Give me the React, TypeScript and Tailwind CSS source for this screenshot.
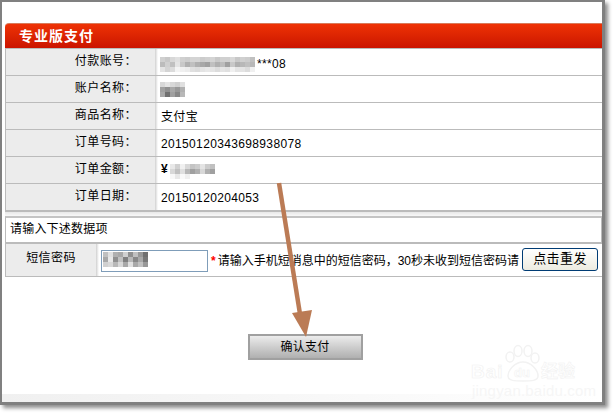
const font = {
  fontFamily: '"Liberation Sans", "Noto Sans CJK SC", sans-serif',
};

const accountCells = [
  "d0d0d0 c8c8c8 d8d8d8 e0e0e0 d0d0d0 cccccc d4d4d4 d4d4d4 cccccc d0d0d0 d4d4d4 c8c8c8 d0d0d0 d0d0d0 d8d8d8 c8c8c8 d0d0d0 cccccc c0c0c0",
  "bcbcbc d0d0d0 c0c0c0 e4e4e4 c8c8c8 b0b0b0 c0c0c0 b0b0b0 a8a8a8 a0a0a0 c0c0c0 b0b0b0 bcbcbc a0a0a0 c8c8c8 b0b0b0 b8b8b8 c0c0c0 b8b8b8",
  "e4e4e4 d4d4d4 dcdcdc f4f4f4 f0f0f0 ececec e0e0e0 dcdcdc e4e4e4 e8e8e8 e4e4e4 dcdcdc e4e4e4 e0e0e0 f0f0f0 e4e4e4 e4e4e4 dcdcdc f0f0f0",
].map((r) => r.split(" "));
const nameCells = [
  "d8d8d8 e4e4e4 d8d8d8 d0d0d0 e0e0e0",
  "a0a0a0 909090 a8a8a8 989898 b0b0b0",
  "a8a8a8 707070 a0a0a0 888888 b8b8b8",
].map((r) => r.split(" "));
const amountCells = [
  "e8e8e8 d0d0d0 f0f0f0 d8d8d8 c4c4c4 cccccc e4e4e4 cccccc c0c0c0",
  "d8d8d8 c0c0c0 e0e0e0 b8b8b8 a0a0a0 b0b0b0 d8d8d8 b0b0b0 a0a0a0",
  "f8f8f8 e8e8e8 fafafa f0f0f0 ffffff ffffff ffffff ffffff ffffff",
].map((r) => r.split(" "));
const codeCells = [
  "c0c0c0 e0e0e0 b0b0b0 a8a8a8 d0d0d0 909090 c0c0c0 989898 707070",
  "a8a8a8 e8e8e8 909090 c0c0c0 808080 b8b8b8 888888 a8a8a8 787878",
  "d0d0d0 d8d8d8 b8b8b8 d8d8d8 a8a8a8 e0e0e0 a8a8a8 c0c0c0 989898",
].map((r) => r.split(" "));

function Mosaic({ cells, size = 5 }: { cells: string[][]; size?: number }) {
  return (
    <span className="inline-flex flex-col">
      {cells.map((row, y) => (
        <span className="flex" key={y}>
          {row.map((c, x) => (
            <span
              key={x}
              style={{ width: size, height: size, background: `#${c}` }}
            />
          ))}
        </span>
      ))}
    </span>
  );
}

function Row({
  label,
  children,
  last,
}: {
  label: string;
  children: React.ReactNode;
  last?: boolean;
}) {
  return (
    <div
      className={`flex h-[27px] border-b border-[#bbbbbb] ${
        last ? "border-b-2 h-[28px]" : ""
      }`}
    >
      <div className="flex w-[149px] items-center justify-end bg-[#ececec] pr-[18px] pb-[3px] tracking-[0.45px]">
        {label}
      </div>
      <div className="w-[3px] bg-gradient-to-r from-[#d0d0d0] to-white" />
      <div className="flex flex-1 items-center pl-[3px] pt-[1px] tracking-[0.35px]">
        {children}
      </div>
    </div>
  );
}

function Watermark() {
  return (
    <div className="absolute left-[460px] top-[340px] h-[62px] w-[125px] text-white select-none">
      <svg
        className="absolute left-0 top-0"
        width="125"
        height="62"
        viewBox="0 0 125 62"
        fill="#fff"
        stroke="#f2f2f2"
        strokeWidth="1.5"
      >
        <ellipse cx="50" cy="17" rx="4" ry="5" />
        <ellipse cx="58" cy="11" rx="4" ry="5.5" />
        <ellipse cx="68" cy="11" rx="4" ry="5.5" />
        <ellipse cx="75" cy="18" rx="4" ry="5" />
        <path d="M63 22c8 0 15 8 15 14 0 5-7 5-15 5s-15 0-15-5c0-6 7-14 15-14z" />
      </svg>
      <span className="absolute left-[11px] top-[21px] text-[19px] font-bold leading-[22px] tracking-[1px] [-webkit-text-stroke:0.7px_#f2f2f2]">
        Bai
      </span>
      <span className="absolute left-[54px] top-[25px] text-[13px] font-bold leading-[16px] [-webkit-text-stroke:0.6px_#f2f2f2]">
        du
      </span>
      <span className="absolute left-[81px] top-[21px] text-[17px] font-bold leading-[22px] [-webkit-text-stroke:0.6px_#f2f2f2]">
        经验
      </span>
      <span className="absolute left-[12px] top-[43px] text-[15px] leading-[16px] tracking-[0.2px] text-[#f6f6f6]">
        jingyan.baidu.com
      </span>
    </div>
  );
}

export default function App() {
  return (
    <div
      className="relative h-[413px] w-[613px] overflow-hidden bg-white text-[12px] leading-none text-black"
      style={font}
    >
      <div className="flex h-[405px] w-[605px] flex-col border-t-2 border-r-[3px] border-b-[3px] border-l-2 border-[#808080] shadow-[3px_3px_4px_rgba(0,0,0,0.45)]">
        <div className="flex-1 pt-[21px] pl-[3px]">
          <div className="flex h-[25px] items-center rounded-tl-[4px] border-t border-[#d97a5a] bg-gradient-to-b from-[#ee3205] to-[#cb1300] pl-[14px] pb-[1px] text-[14px] font-bold tracking-[1px] text-white">
            专业版支付
          </div>
          <div className="border-l border-t border-[#bbbbbb]">
            <Row label="付款账号：">
              <span className="-ml-[1px] mb-[1px]">
                <Mosaic cells={accountCells} />
              </span>
              <span className="ml-[2px] mt-[2px]">***08</span>
            </Row>
            <Row label="账户名称：">
              <span className="mb-[6px] -ml-[1px]">
                <Mosaic cells={nameCells} />
              </span>
            </Row>
            <Row label="商品名称：">支付宝</Row>
            <Row label="订单号码：">20150120343698938078</Row>
            <Row label="订单金额：">
              <span className="mb-[3px] font-bold">¥</span>
              <span className="mb-[3px] ml-[2px]">
                <Mosaic cells={amountCells} />
              </span>
            </Row>
            <Row label="订单日期：" last>
              <span className="pt-[1px]">20150120204053</span>
            </Row>
          </div>
          <div className="h-[4px] bg-gradient-to-b from-[#e8e8e8] to-[#f8f8f8]" />
          <div className="flex h-[28px] items-center border-x border-y-2 border-[#bbbbbb] border-t-[#c4c4c4] pl-[4px] pb-[3px] tracking-[0.2px]">
            请输入下述数据项
          </div>
          <div className="flex h-[33px] border-b border-l border-[#bbbbbb]">
            <div className="flex w-[90px] items-center justify-center bg-[#ececec] pb-[4px] tracking-[0.4px]">
              短信密码
            </div>
            <div className="w-[3px] bg-gradient-to-r from-[#d0d0d0] to-white" />
            <div className="flex flex-1 items-center pl-[2px]">
              <div className="mt-[1px] flex h-[22px] w-[107px] items-center border border-[#7f9db9] pl-[1px] pb-[2px]">
                <Mosaic cells={codeCells} />
              </div>
              <span className="ml-[3px] mt-[2px] font-bold text-[#f00]">*</span>
              <span className="ml-[2px] mt-[1px] whitespace-nowrap">
                请输入手机短消息中的短信密码，30秒未收到短信密码请
              </span>
              <button className="ml-auto mr-[4px] mb-[1px] flex h-[23px] w-[76px] shrink-0 items-center justify-center rounded-[3px] border border-[#003c74] bg-gradient-to-b from-white to-[#ecebe0] pb-[3px] text-[13px] tracking-[0.4px]">
                点击重发
              </button>
            </div>
          </div>
          <div className="flex justify-center pt-[57px] pl-[3px]">
            <button className="flex h-[26px] w-[115px] items-center justify-center border-2 border-[#a0a0a0] bg-gradient-to-b from-[#ececec] to-[#b0b0b0] tracking-[0.2px]">
              确认支付
            </button>
          </div>
        </div>
        <div className="h-[8px] bg-gradient-to-r from-[#f0f0f0] to-white" />
      </div>
      <svg
        className="absolute left-0 top-0"
        width="613"
        height="413"
        viewBox="0 0 613 413"
      >
        <path d="M279 183 L300 314" stroke="#bb7b55" strokeWidth="4.5" />
        <path d="M292 313 L312 310 L306 337 Z" fill="#bb7b55" />
      </svg>
      <Watermark />
    </div>
  );
}
